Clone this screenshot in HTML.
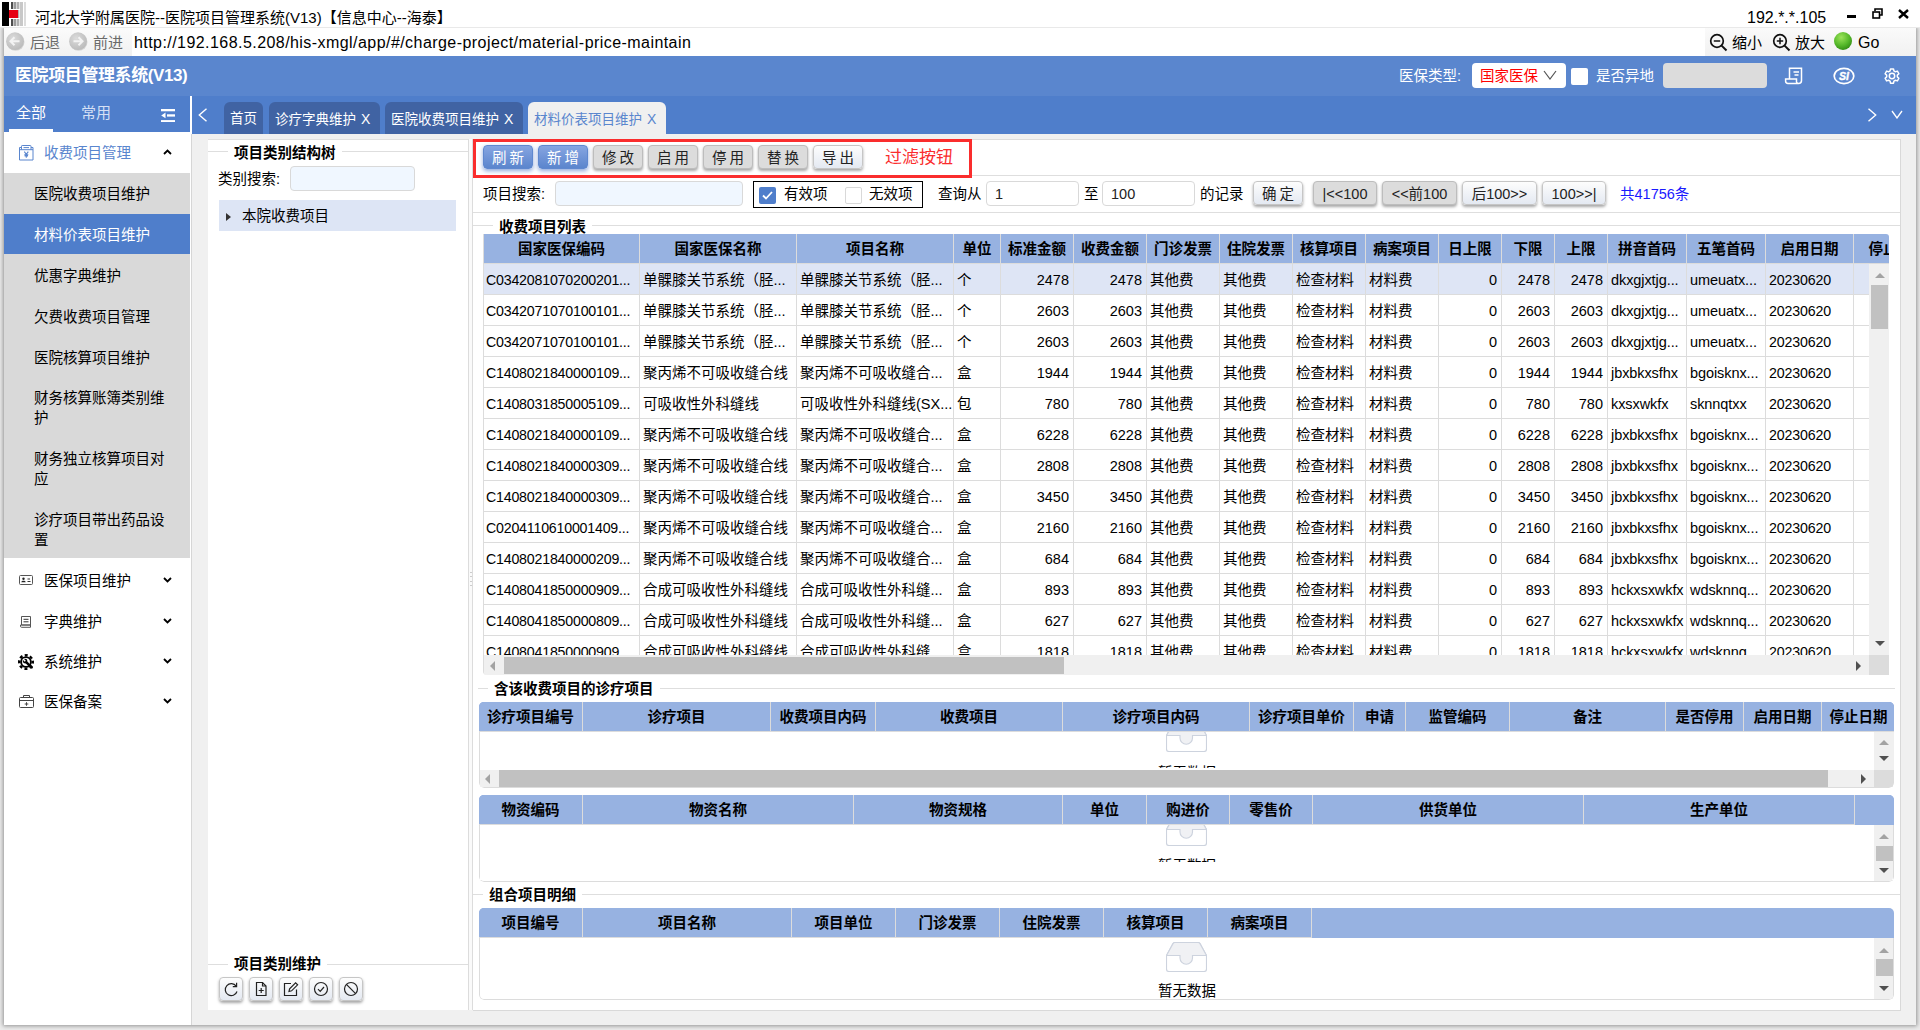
<!DOCTYPE html>
<html lang="zh-CN">
<head>
<meta charset="utf-8">
<title>河北大学附属医院--医院项目管理系统(V13)</title>
<style>
*{box-sizing:border-box;margin:0;padding:0}
html,body{width:1920px;height:1030px;overflow:hidden}
body{position:relative;background:#ebebeb;font-family:"Liberation Sans","Noto Sans CJK SC",sans-serif;font-size:14.5px;color:#000}
.abs{position:absolute}
.t{position:absolute;white-space:nowrap;line-height:20px}
/* window chrome */
#titlebar{left:0;top:0;width:1920px;height:28px;background:#fff;z-index:3;border-bottom:1px solid #e9e9e9}
#win{left:4px;top:28px;width:1912px;height:997px;background:#f0f0f0;box-shadow:0 0 4px 1px rgba(0,0,0,.38)}
#navbar{left:0;top:0;width:1912px;height:28px;background:#fff}
#hdr{left:0;top:28px;width:1912px;height:40px;background:#5a86ce}
#tabrow{left:0;top:68px;width:1912px;height:38px;background:#4f7ecb}
#sidetab{left:0;top:68px;width:186px;height:36px;background:#4f7ecb}
/* sidebar */
#side{left:0;top:104px;width:187px;height:893px;background:#fff}
.sub{position:absolute;left:0;width:186px;background:#d9d9d9}
.sub .t{left:30px;font-size:14.5px}
.mi{position:absolute;left:40px;font-size:14.5px;line-height:20px;white-space:nowrap}
.caret{position:absolute;left:159px;width:9px;height:6px}
/* tabs */
.tab{position:absolute;top:6px;height:32px;background:#4063a3;border-radius:6px 6px 0 0;color:#fff;font-size:13.5px;line-height:20px;padding:7px 0 0 6px;white-space:nowrap}
.tab.act{background:#f0f0f0;color:#5a86ce}
.tab b{font-weight:normal;font-size:14px;margin-left:5px}
/* panels */
.panel{position:absolute;background:#fff}
.hl{position:absolute;height:1px;background:#dedede}
.vl{position:absolute;width:1px;background:#dedede}
.lg{position:absolute;font-weight:bold;font-size:14.5px;line-height:20px;background:#fff;padding:0 6px;white-space:nowrap}
.btn{position:absolute;height:24px;border:1px solid #c6c6c6;border-radius:4px;background:linear-gradient(#fdfdfd,#e4e9f2);box-shadow:0 2px 3px rgba(0,0,0,.35);font-size:14.5px;line-height:24px;text-align:center;white-space:nowrap;color:#222}
.btn.pri{background:linear-gradient(#86a5e1,#5b85cd);border-color:#5f88cf;color:#fff;box-shadow:0 2px 4px rgba(50,95,190,.55)}
.btn.dis{background:#dcdcdc;border-color:#bdbdbd;color:#222}
.inp{position:absolute;border:1px solid #d9d9d9;border-radius:4px;background:#f0f7ff}
/* tables */
.tb{position:absolute;overflow:hidden}
.th{position:absolute;top:0;height:30px;background:#97b2e1;border-right:1px solid #dcdcdc;border-bottom:1px solid #dcdcdc;font-weight:bold;font-size:14.5px;line-height:30px;text-align:center;white-space:nowrap;overflow:hidden}
.row{position:absolute;left:0;height:31px;border-bottom:1px solid #dcdcdc}
.c{position:absolute;top:0;height:31px;border-right:1px solid #dcdcdc;font-size:14.5px;line-height:33px;padding:0 3px;white-space:nowrap;overflow:hidden}
.c.c0{font-size:14.2px;letter-spacing:-.2px;padding-left:2px}
.c.c1{font-size:14.2px;letter-spacing:-.15px}
.c.c2{letter-spacing:-.08px}
.c.r{text-align:right;padding-right:4px}
.sbv{position:absolute;width:20px;background:#f0f0f0}
.sbh{position:absolute;height:19px;background:#f0f0f0}
.thumb{position:absolute;background:#c1c1c1}
.au,.ad,.al,.ar{position:absolute;width:0;height:0;border:5px solid transparent}
.au{border-top:0;border-bottom:5px solid #a3a3a3}
.ad{border-bottom:0;border-top:5px solid #505050}
.al{border-left:0;border-right:5px solid #a3a3a3}
.ar{border-right:0;border-left:5px solid #505050}
.empty{position:absolute;font-size:14.5px;line-height:20px;white-space:nowrap;color:#000}
</style>
</head>
<body>
<div id="titlebar" class="abs">
  
  <svg class="abs" style="left:2px;top:2px" width="25" height="24" viewBox="0 0 25 24">
    <rect x="0" y="0" width="7" height="24" fill="#000"/>
    <rect x="9" y="0" width="2" height="24" fill="#4d4d4d"/>
    <rect x="11" y="0" width="1" height="24" fill="#c8c8c8"/>
    <rect x="12" y="0" width="2" height="24" fill="#9a9a9a"/>
    <rect x="14" y="0" width="1" height="24" fill="#d8d8d8"/>
    <rect x="15" y="0" width="2" height="24" fill="#b0b0b0"/>
    <rect x="17" y="0" width="1" height="24" fill="#e4e4e4"/>
    <rect x="18" y="0" width="3" height="24" fill="#c8c8c8"/>
    <rect x="22" y="0" width="2" height="24" fill="#dcdcdc"/>
    <rect x="7" y="8" width="9" height="8" fill="#e60012"/>
    <rect x="7" y="16" width="11" height="1" fill="#fff"/>
    <rect x="7" y="7" width="11" height="1" fill="#fff"/>
  </svg>
  <div class="t" style="left:35px;top:7px;font-size:15px;line-height:22px">河北大学附属医院--医院项目管理系统(V13)【信息中心--海泰】</div>
  <div class="t" style="left:1747px;top:7px;font-size:16px;line-height:22px">192.*.*.105</div>
  <div class="abs" style="left:1847px;top:15px;width:9px;height:3px;background:#000"></div>
  <svg class="abs" style="left:1872px;top:8px" width="11" height="11" viewBox="0 0 11 11" fill="none" stroke="#000" stroke-width="1.6">
    <path d="M3 3V1H10V7H8"/><rect x="1" y="4" width="6.5" height="6"/>
  </svg>
  <svg class="abs" style="left:1898px;top:9px" width="11" height="10" viewBox="0 0 11 10" fill="none" stroke="#000" stroke-width="2.4">
    <path d="M1 1L10 9M10 1L1 9"/>
  </svg>

</div>
<div id="win" class="abs">
  <div id="navbar" class="abs">
    
    <div class="abs" style="left:0;top:0;width:128px;height:28px;background:linear-gradient(#fbfbfb,#f1f1f1)"></div>
    <div class="abs" style="left:1701px;top:0;width:211px;height:28px;background:linear-gradient(#fafafa,#f1f1f1)"></div>
    <svg class="abs" style="left:1px;top:3px" width="22" height="22" viewBox="0 0 22 22">
      <defs><radialGradient id="gb" cx="40%" cy="35%" r="70%"><stop offset="0" stop-color="#dcdcdc"/><stop offset="1" stop-color="#b9b9b9"/></radialGradient></defs>
      <circle cx="10.600" cy="10.900" r="8.900" fill="rgba(0,0,0,.13)"/><circle cx="10" cy="10.200" r="8.900" fill="url(#gb)"/>
      <path d="M14.500 10.200H6M9.500 6.200L5.500 10.200L9.500 14.200" stroke="#f3f3f3" stroke-width="2" fill="none"/>
    </svg>
    <div class="t" style="left:26px;top:4px;font-size:15px;line-height:22px;color:#6a6a6a">后退</div>
    <svg class="abs" style="left:63.900px;top:3px" width="22" height="22" viewBox="0 0 22 22">
      <circle cx="10.600" cy="10.900" r="8.900" fill="rgba(0,0,0,.13)"/><circle cx="10" cy="10.200" r="8.900" fill="url(#gb)"/>
      <path d="M5.500 10.200H14M10.500 6.200L14.500 10.200L10.500 14.200" stroke="#f3f3f3" stroke-width="2" fill="none"/>
    </svg>
    <div class="t" style="left:89px;top:4px;font-size:15px;line-height:22px;color:#6a6a6a">前进</div>
    <div class="t" style="left:130px;top:4px;font-size:16px;line-height:22px;letter-spacing:.44px" id="url">http://192.168.5.208/his-xmgl/app/#/charge-project/material-price-maintain</div>
    <svg class="abs" style="left:1705px;top:5px" width="19" height="19" viewBox="0 0 19 19" fill="none" stroke="#111" stroke-width="1.7">
      <circle cx="8" cy="8" r="6.3"/><path d="M12.6 12.6L17.5 17.5" stroke-width="2"/><path d="M4.8 8H11.2" stroke-width="1.5"/>
    </svg>
    <div class="t" style="left:1728px;top:4px;font-size:15px;line-height:22px">缩小</div>
    <svg class="abs" style="left:1768px;top:5px" width="19" height="19" viewBox="0 0 19 19" fill="none" stroke="#111" stroke-width="1.7">
      <circle cx="8" cy="8" r="6.3"/><path d="M12.6 12.6L17.5 17.5" stroke-width="2"/><path d="M4.8 8H11.2M8 4.8V11.2" stroke-width="1.5"/>
    </svg>
    <div class="t" style="left:1791px;top:4px;font-size:15px;line-height:22px">放大</div>
    <svg class="abs" style="left:1829px;top:3px" width="21" height="21" viewBox="0 0 21 21">
      <defs><radialGradient id="gg" cx="40%" cy="30%" r="75%"><stop offset="0" stop-color="#9be35a"/><stop offset=".6" stop-color="#55b82a"/><stop offset="1" stop-color="#2f8a12"/></radialGradient></defs>
      <circle cx="10" cy="10" r="9" fill="url(#gg)"/>
    </svg>
    <div class="t" style="left:1854px;top:4px;font-size:16px;line-height:22px">Go</div>

  </div>
  <div id="hdr" class="abs">
    
    <div class="t" style="left:11px;top:9px;font-size:17px;line-height:22px;font-weight:bold;color:#fff;letter-spacing:-.4px">医院项目管理系统(V13)</div>
    <div class="t" style="left:1395px;top:10px;color:#fff">医保类型:</div>
    <div class="abs" style="left:1468px;top:7px;width:94px;height:25px;background:#fff;border-radius:4px"></div>
    <div class="t" style="left:1476px;top:10px;color:#f00">国家医保</div>
    <svg class="abs" style="left:1539px;top:14px" width="14" height="10" viewBox="0 0 14 10" fill="none" stroke="#555" stroke-width="1.2"><path d="M1 1L7 9L13 1"/></svg>
    <div class="abs" style="left:1567px;top:12px;width:17px;height:17px;background:#fff;border-radius:2px"></div>
    <div class="t" style="left:1592px;top:10px;color:#fff">是否异地</div>
    <div class="abs" style="left:1659px;top:7px;width:104px;height:25px;background:#dcdcdc;border-radius:4px"></div>
    <svg class="abs" style="left:1780px;top:10px" width="20" height="20" viewBox="0 0 20 20" fill="none" stroke="#fff" stroke-width="1.5">
      <path d="M5.5 13V2.2H17.5V14.5A3 3 0 0 1 14.5 17.5H4A2.4 2.4 0 0 1 1.6 15.1V13H12.5V15A2 2 0 0 0 14.5 17.5"/>
      <path d="M9.500 6H15M10.500 9H14.500"/>
    </svg>
    <svg class="abs" style="left:1829px;top:11px" width="22" height="18" viewBox="0 0 22 18" fill="none" stroke="#fff">
      <ellipse cx="11" cy="9" rx="9.8" ry="7.6" stroke-width="1.7"/>
      <text x="11" y="12.800" text-anchor="middle" font-family="Liberation Sans,sans-serif" font-weight="bold" font-style="italic" font-size="10.600" fill="#fff" stroke="#fff" stroke-width=".35">SI</text>
    </svg>
    <svg class="abs" style="left:1879px;top:11px" width="18" height="18" viewBox="0 0 24 24" fill="none" stroke="#fff" stroke-width="2">
      <circle cx="12" cy="12" r="3.6"/>
      <path d="M10 2.5h4l.6 2.8 1.9 1.1 2.7-.9 2 3.5-2.1 1.9v2.2l2.1 1.9-2 3.5-2.7-.9-1.9 1.1-.6 2.8h-4l-.6-2.8-1.9-1.1-2.7.9-2-3.5 2.1-1.9v-2.2L2.800 9l2-3.500 2.700.900 1.900-1.100z" stroke-linejoin="round"/>
    </svg>

  </div>
  <div id="tabrow" class="abs">
    
    <div class="abs" style="left:186px;top:0;width:2px;height:38px;background:#fff"></div>
    <svg class="abs" style="left:194px;top:11.600px" width="9" height="14" viewBox="0 0 9 14" fill="none" stroke="#fff" stroke-width="1.400"><path d="M8.500 .7L1.300 7L8.500 13.300"/></svg>
    <div class="tab" style="left:220px;width:39px">首页</div>
    <div class="tab" style="left:265px;width:111px">诊疗字典维护<b>X</b></div>
    <div class="tab" style="left:381px;width:138px">医院收费项目维护<b>X</b></div>
    <div class="tab act" style="left:524px;width:138px">材料价表项目维护<b>X</b></div>
    <svg class="abs" style="left:1864px;top:11.600px" width="9" height="14" viewBox="0 0 9 14" fill="none" stroke="#fff" stroke-width="1.400"><path d="M.5 .7L7.700 7L.5 13.300"/></svg>
    <svg class="abs" style="left:1887px;top:14px" width="12" height="9" viewBox="0 0 12 9" fill="none" stroke="#fff" stroke-width="1.3"><path d="M1 1L6 8L11 1"/></svg>

  </div>
  <div id="sidetab" class="abs">
    
    <div class="t" style="left:12px;top:6px;font-size:15px;line-height:22px;color:#fff">全部</div>
    <div class="t" style="left:77px;top:6px;font-size:15px;line-height:22px;color:#d5e0f5">常用</div>
    <div class="abs" style="left:5px;top:33px;width:44px;height:3px;background:#fff"></div>
    <svg class="abs" style="left:157px;top:12.600px" width="14" height="13.400" viewBox="0 0 14 13.400" fill="#fff">
      <rect x="0" y="0" width="14" height="2.300"/><rect x="6" y="5.300" width="8" height="2.300"/><rect x="0" y="11.100" width="14" height="2.300"/>
      <path d="M4.500 3.600V9.300L.2 6.450z"/>
    </svg>

  </div>
  <div id="side" class="abs">
    
    <svg class="abs" style="left:14.5px;top:12.5px" width="15" height="16" viewBox="0 0 15 16" fill="none" stroke="#5a86ce" stroke-width="1">
      <path d="M2.500 2.500H.5V15H14V2.500H12"/><path d="M2.500 4.700V1.200Q2.500 .5 3.200 .5H11.300Q12 .5 12 1.200V4.700"/><path d="M.5 4.700H14"/><path d="M4.500 2.600H10"/>
      <path d="M5.300 6.600L7.300 9.300L9.300 6.600M7.300 9.300V12.800M5.300 9.800H9.300M5.600 10.900H9" stroke-width="1.100"/>
    </svg>
    <div class="mi" style="top:11px;color:#5a86ce">收费项目管理</div>
    <svg class="caret" style="top:17px" viewBox="0 0 9 6" fill="none" stroke="#000" stroke-width="1.8"><path d="M1 5L4.500 1.500L8 5"/></svg>

    <div class="sub" style="top:41px;height:385px">
      <div class="t" style="top:11px">医院收费项目维护</div>
      <div class="abs" style="left:0;top:41px;width:186px;height:40px;background:#4f7ecb"></div>
      <div class="t" style="top:52px;color:#fff">材料价表项目维护</div>
      <div class="t" style="top:93px">优惠字典维护</div>
      <div class="t" style="top:134px">欠费收费项目管理</div>
      <div class="t" style="top:175px">医院核算项目维护</div>
      <div class="t" style="top:215px">财务核算账簿类别维<br>护</div>
      <div class="t" style="top:276px">财务独立核算项目对<br>应</div>
      <div class="t" style="top:337px">诊疗项目带出药品设<br>置</div>
    </div>

    <svg class="abs" style="left:15px;top:443px" width="14" height="10" viewBox="0 0 14 10" fill="none" stroke="#555" stroke-width="1">
      <rect x=".5" y=".5" width="13" height="9" rx="1"/><circle cx="4.500" cy="3.800" r="1.200" fill="#222" stroke="none"/><path d="M2.400 7.200C2.400 5.400 6.600 5.400 6.600 7.200z" fill="#222" stroke="none"/><path d="M8.500 4H11M8.500 6.500H11.500" stroke="#333"/>
    </svg>
    <div class="mi" style="top:439px">医保项目维护</div>
    <svg class="caret" style="top:445px" viewBox="0 0 9 6" fill="none" stroke="#000" stroke-width="1.8"><path d="M1 1L4.500 4.500L8 1"/></svg>

    <svg class="abs" style="left:16px;top:484px" width="12" height="12" viewBox="0 0 12 12" fill="none" stroke="#555" stroke-width="1">
      <path d="M1.500 .5H10.500V9H1.500z"/><path d="M.5 9H10.500V11.300H1.500Q.5 11.300 .5 10.200z"/><path d="M3.500 3.300H8.500M3.500 5.800H8.500" stroke="#333"/>
    </svg>
    <div class="mi" style="top:480px">字典维护</div>
    <svg class="caret" style="top:486px" viewBox="0 0 9 6" fill="none" stroke="#000" stroke-width="1.8"><path d="M1 1L4.500 4.500L8 1"/></svg>

    <svg class="abs" style="left:14px;top:521.5px" width="16" height="16" viewBox="0 0 16 16">
      <circle cx="8" cy="8" r="4.900" fill="none" stroke="#000" stroke-width="1.900"/>
      <circle cx="8" cy="8" r="6.800" fill="none" stroke="#000" stroke-width="2.400" stroke-dasharray="3 2.340" stroke-dashoffset="1.500"/>
      <path d="M7.600 7.600L13.700 13.400" stroke="#000" stroke-width="2.500" stroke-linecap="round"/>
      <circle cx="7.100" cy="7.100" r="2.300" fill="#000"/>
      <path d="M7.300 7.300L5 5" stroke="#fff" stroke-width="1.500"/>
    </svg>
    <div class="mi" style="top:520px">系统维护</div>
    <svg class="caret" style="top:526px" viewBox="0 0 9 6" fill="none" stroke="#000" stroke-width="1.800"><path d="M1 1L4.500 4.500L8 1"/></svg>

    <svg class="abs" style="left:14.5px;top:563px" width="15" height="13" viewBox="0 0 15 13" fill="none" stroke="#444" stroke-width="1">
      <rect x=".5" y="2.500" width="14" height="10" rx="1"/><path d="M4.500 2.500V.5H10.500V2.500"/><path d="M.5 5.500H14.500"/><path d="M7.500 7.200V10.800M5.700 9H9.300"/>
    </svg>
    <div class="mi" style="top:560px">医保备案</div>
    <svg class="caret" style="top:566px" viewBox="0 0 9 6" fill="none" stroke="#000" stroke-width="1.800"><path d="M1 1L4.500 4.500L8 1"/></svg>
    <div class="abs" style="left:187px;top:2px;width:1px;height:891px;background:#d6d6d6"></div>

  </div>
  
  <div class="panel" style="left:204px;top:111px;width:261px;height:871px;border-right:1px solid #dcdcdc">
    <div class="hl" style="left:0;top:0;width:260px;background:#e0e0e0"></div>
    <div class="hl" style="left:0;top:12px;width:260px"></div>
    <div class="lg" style="left:20px;top:4px">项目类别结构树</div>
    <div class="t" style="left:10px;top:30px">类别搜索:</div>
    <div class="inp" style="left:82px;top:27px;width:125px;height:25px"></div>
    <div class="abs" style="left:11px;top:61px;width:237px;height:31px;background:#dde5f5"></div>
    <div class="abs" style="left:18px;top:74px;width:0;height:0;border:4px solid transparent;border-left:5px solid #333;border-right:0"></div>
    <div class="t" style="left:34px;top:67px">本院收费项目</div>
    <div class="hl" style="left:0;top:825px;width:260px"></div>
    <div class="lg" style="left:20px;top:815px">项目类别维护</div>
    <div class="btn" style="left:11px;top:838px;width:24px;height:24px"><svg style="position:absolute;left:3px;top:3px" width="16" height="16" viewBox="0 0 16 16" fill="none" stroke="#222" stroke-width="1.200"><path d="M13.200 5.200A6 6 0 1 0 14 10.500" /><path d="M13.600 1.800V5.600H9.800" /></svg></div><div class="btn" style="left:41px;top:838px;width:24px;height:24px"><svg style="position:absolute;left:3px;top:3px" width="16" height="16" viewBox="0 0 16 16" fill="none" stroke="#222" stroke-width="1.200"><path d="M3.500 1.500H9.500L13 5V14.500H3.500z"/><path d="M9.500 1.500V5H13"/><path d="M8.200 7V12M5.700 9.500H10.700"/></svg></div><div class="btn" style="left:71px;top:838px;width:24px;height:24px"><svg style="position:absolute;left:3px;top:3px" width="16" height="16" viewBox="0 0 16 16" fill="none" stroke="#222" stroke-width="1.200"><path d="M13.500 8.500V14.500H1.500V2.500H8"/><path d="M6 10.500L6.600 7.800L12.600 1.800L14.600 3.800L8.600 9.800z"/></svg></div><div class="btn" style="left:101px;top:838px;width:24px;height:24px"><svg style="position:absolute;left:3px;top:3px" width="16" height="16" viewBox="0 0 16 16" fill="none" stroke="#222" stroke-width="1.200"><circle cx="8" cy="8" r="6.500"/><path d="M5 8.200L7.200 10.400L11 6"/></svg></div><div class="btn" style="left:131px;top:838px;width:24px;height:24px"><svg style="position:absolute;left:3px;top:3px" width="16" height="16" viewBox="0 0 16 16" fill="none" stroke="#222" stroke-width="1.200"><circle cx="8" cy="8" r="6.500"/><path d="M3.400 3.400L12.600 12.600"/></svg></div>
  </div>
  <div class="abs" style="left:465px;top:111px;width:4px;height:871px;background:#fafafa;border-right:1px solid #dcdcdc"></div>
  <div class="abs" style="left:466px;top:544px;width:2px;height:1px;background:#ccc;box-shadow:0 4px 0 #ccc,0 9px 0 #ccc,0 13px 0 #ccc"></div>

  
  <div class="panel" id="main" style="left:469px;top:111px;width:1428px;height:872px;border-right:1px solid #d9d9d9;border-bottom:1px solid #d9d9d9">
    <div class="hl" style="left:0;top:0;width:1427px;background:#dcdcdc"></div>
    <div class="hl" style="left:0;top:36px;width:1427px"></div>
    <div class="hl" style="left:0;top:73px;width:1427px"></div>
    <div class="abs" style="left:0;top:0;width:499px;height:39px;border:3px solid #fa2d2d"></div>
    <div class="btn pri" style="left:10px;top:6px;width:50px;letter-spacing:3px;padding-left:3px">刷新</div><div class="btn pri" style="left:65px;top:6px;width:50px;letter-spacing:3px;padding-left:3px">新增</div><div class="btn dis" style="left:120px;top:6px;width:50px;letter-spacing:3px;padding-left:3px">修改</div><div class="btn dis" style="left:175px;top:6px;width:50px;letter-spacing:3px;padding-left:3px">启用</div><div class="btn dis" style="left:230px;top:6px;width:50px;letter-spacing:3px;padding-left:3px">停用</div><div class="btn dis" style="left:285px;top:6px;width:50px;letter-spacing:3px;padding-left:3px">替换</div><div class="btn " style="left:340px;top:6px;width:50px;letter-spacing:3px;padding-left:3px">导出</div>
    <div class="t" style="left:412px;top:7px;font-size:17px;line-height:24px;color:#fa2d2d">过滤按钮</div>
    
    <div class="t" style="left:10px;top:45px">项目搜索:</div>
    <div class="inp" style="left:82px;top:42px;width:188px;height:25px"></div>
    <div class="abs" style="left:280px;top:42px;width:170px;height:27px;border:1px solid #000"></div>
    <div class="abs" style="left:286px;top:48px;width:17px;height:17px;background:#4f7ecb;border-radius:2px"><svg style="position:absolute;left:3px;top:4px" width="11" height="9" viewBox="0 0 11 9" fill="none" stroke="#fff" stroke-width="1.8"><path d="M1 4.500L4 7.500L10 1"/></svg></div>
    <div class="t" style="left:311px;top:45px">有效项</div>
    <div class="abs" style="left:372px;top:48px;width:17px;height:17px;background:#fff;border:1px solid #d9d9d9;border-radius:2px"></div>
    <div class="t" style="left:396px;top:45px">无效项</div>
    <div class="t" style="left:465px;top:45px">查询从</div>
    <div class="inp" style="left:513px;top:42px;width:93px;height:25px;background:#fff"></div>
    <div class="t" style="left:522px;top:45px;color:#222">1</div>
    <div class="t" style="left:611px;top:45px">至</div>
    <div class="inp" style="left:629px;top:42px;width:93px;height:25px;background:#fff"></div>
    <div class="t" style="left:638px;top:45px;color:#222">100</div>
    <div class="t" style="left:727px;top:45px">的记录</div>
    <div class="btn " style="left:780px;top:42px;width:50px;letter-spacing:3px;padding-left:3px">确定</div>
    <div class="btn dis" style="left:840px;top:42px;width:64px;letter-spacing:0">|&lt;&lt;100</div>
    <div class="btn dis" style="left:909px;top:42px;width:75px;letter-spacing:0">&lt;&lt;前100</div>
    <div class="btn " style="left:989px;top:42px;width:75px;letter-spacing:0">后100&gt;&gt;</div>
    <div class="btn " style="left:1069px;top:42px;width:64px;letter-spacing:0">100&gt;&gt;|</div>
    <div class="t" style="left:1147px;top:45px;color:#1a1aff">共41756条</div>
    <div class="hl" style="left:0;top:86px;width:1427px"></div>
    <div class="lg" style="left:20px;top:78px">收费项目列表</div>

    <div class="tb" style="left:10px;top:95px;width:1406px;height:441px;border-left:1px solid #dcdcdc;border-radius:0 3px 0 4px">
<div class="th" style="left:0px;width:156px">国家医保编码</div>
<div class="th" style="left:156px;width:157px">国家医保名称</div>
<div class="th" style="left:313px;width:157px">项目名称</div>
<div class="th" style="left:470px;width:47px">单位</div>
<div class="th" style="left:517px;width:73px">标准金额</div>
<div class="th" style="left:590px;width:73px">收费金额</div>
<div class="th" style="left:663px;width:73px">门诊发票</div>
<div class="th" style="left:736px;width:73px">住院发票</div>
<div class="th" style="left:809px;width:73px">核算项目</div>
<div class="th" style="left:882px;width:73px">病案项目</div>
<div class="th" style="left:955px;width:63px">日上限</div>
<div class="th" style="left:1018px;width:53px">下限</div>
<div class="th" style="left:1071px;width:53px">上限</div>
<div class="th" style="left:1124px;width:79px">拼音首码</div>
<div class="th" style="left:1203px;width:79px">五笔首码</div>
<div class="th" style="left:1282px;width:88px">启用日期</div>
<div class="th" style="left:1370px;width:88px">停止日期</div>
<div class="row" style="top:30px;width:1460px;background:#dee5f5;">
<div class="c c0" style="left:0px;width:156px">C0342081070200201...</div>
<div class="c" style="left:156px;width:157px">单髁膝关节系统（胫...</div>
<div class="c" style="left:313px;width:157px">单髁膝关节系统（胫...</div>
<div class="c" style="left:470px;width:47px">个</div>
<div class="c r" style="left:517px;width:73px">2478</div>
<div class="c r" style="left:590px;width:73px">2478</div>
<div class="c" style="left:663px;width:73px">其他费</div>
<div class="c" style="left:736px;width:73px">其他费</div>
<div class="c" style="left:809px;width:73px">检查材料</div>
<div class="c" style="left:882px;width:73px">材料费</div>
<div class="c r" style="left:955px;width:63px">0</div>
<div class="c r" style="left:1018px;width:53px">2478</div>
<div class="c r" style="left:1071px;width:53px">2478</div>
<div class="c c2" style="left:1124px;width:79px">dkxgjxtjg...</div>
<div class="c c2" style="left:1203px;width:79px">umeuatx...</div>
<div class="c c1" style="left:1282px;width:88px">20230620</div>
<div class="c" style="left:1370px;width:88px"></div>
</div>
<div class="row" style="top:61px;width:1460px;">
<div class="c c0" style="left:0px;width:156px">C0342071070100101...</div>
<div class="c" style="left:156px;width:157px">单髁膝关节系统（胫...</div>
<div class="c" style="left:313px;width:157px">单髁膝关节系统（胫...</div>
<div class="c" style="left:470px;width:47px">个</div>
<div class="c r" style="left:517px;width:73px">2603</div>
<div class="c r" style="left:590px;width:73px">2603</div>
<div class="c" style="left:663px;width:73px">其他费</div>
<div class="c" style="left:736px;width:73px">其他费</div>
<div class="c" style="left:809px;width:73px">检查材料</div>
<div class="c" style="left:882px;width:73px">材料费</div>
<div class="c r" style="left:955px;width:63px">0</div>
<div class="c r" style="left:1018px;width:53px">2603</div>
<div class="c r" style="left:1071px;width:53px">2603</div>
<div class="c c2" style="left:1124px;width:79px">dkxgjxtjg...</div>
<div class="c c2" style="left:1203px;width:79px">umeuatx...</div>
<div class="c c1" style="left:1282px;width:88px">20230620</div>
<div class="c" style="left:1370px;width:88px"></div>
</div>
<div class="row" style="top:92px;width:1460px;">
<div class="c c0" style="left:0px;width:156px">C0342071070100101...</div>
<div class="c" style="left:156px;width:157px">单髁膝关节系统（胫...</div>
<div class="c" style="left:313px;width:157px">单髁膝关节系统（胫...</div>
<div class="c" style="left:470px;width:47px">个</div>
<div class="c r" style="left:517px;width:73px">2603</div>
<div class="c r" style="left:590px;width:73px">2603</div>
<div class="c" style="left:663px;width:73px">其他费</div>
<div class="c" style="left:736px;width:73px">其他费</div>
<div class="c" style="left:809px;width:73px">检查材料</div>
<div class="c" style="left:882px;width:73px">材料费</div>
<div class="c r" style="left:955px;width:63px">0</div>
<div class="c r" style="left:1018px;width:53px">2603</div>
<div class="c r" style="left:1071px;width:53px">2603</div>
<div class="c c2" style="left:1124px;width:79px">dkxgjxtjg...</div>
<div class="c c2" style="left:1203px;width:79px">umeuatx...</div>
<div class="c c1" style="left:1282px;width:88px">20230620</div>
<div class="c" style="left:1370px;width:88px"></div>
</div>
<div class="row" style="top:123px;width:1460px;">
<div class="c c0" style="left:0px;width:156px">C1408021840000109...</div>
<div class="c" style="left:156px;width:157px">聚丙烯不可吸收缝合线</div>
<div class="c" style="left:313px;width:157px">聚丙烯不可吸收缝合...</div>
<div class="c" style="left:470px;width:47px">盒</div>
<div class="c r" style="left:517px;width:73px">1944</div>
<div class="c r" style="left:590px;width:73px">1944</div>
<div class="c" style="left:663px;width:73px">其他费</div>
<div class="c" style="left:736px;width:73px">其他费</div>
<div class="c" style="left:809px;width:73px">检查材料</div>
<div class="c" style="left:882px;width:73px">材料费</div>
<div class="c r" style="left:955px;width:63px">0</div>
<div class="c r" style="left:1018px;width:53px">1944</div>
<div class="c r" style="left:1071px;width:53px">1944</div>
<div class="c c2" style="left:1124px;width:79px">jbxbkxsfhx</div>
<div class="c c2" style="left:1203px;width:79px">bgoisknx...</div>
<div class="c c1" style="left:1282px;width:88px">20230620</div>
<div class="c" style="left:1370px;width:88px"></div>
</div>
<div class="row" style="top:154px;width:1460px;">
<div class="c c0" style="left:0px;width:156px">C1408031850005109...</div>
<div class="c" style="left:156px;width:157px">可吸收性外科缝线</div>
<div class="c" style="left:313px;width:157px">可吸收性外科缝线(SX...</div>
<div class="c" style="left:470px;width:47px">包</div>
<div class="c r" style="left:517px;width:73px">780</div>
<div class="c r" style="left:590px;width:73px">780</div>
<div class="c" style="left:663px;width:73px">其他费</div>
<div class="c" style="left:736px;width:73px">其他费</div>
<div class="c" style="left:809px;width:73px">检查材料</div>
<div class="c" style="left:882px;width:73px">材料费</div>
<div class="c r" style="left:955px;width:63px">0</div>
<div class="c r" style="left:1018px;width:53px">780</div>
<div class="c r" style="left:1071px;width:53px">780</div>
<div class="c c2" style="left:1124px;width:79px">kxsxwkfx</div>
<div class="c c2" style="left:1203px;width:79px">sknnqtxx</div>
<div class="c c1" style="left:1282px;width:88px">20230620</div>
<div class="c" style="left:1370px;width:88px"></div>
</div>
<div class="row" style="top:185px;width:1460px;">
<div class="c c0" style="left:0px;width:156px">C1408021840000109...</div>
<div class="c" style="left:156px;width:157px">聚丙烯不可吸收缝合线</div>
<div class="c" style="left:313px;width:157px">聚丙烯不可吸收缝合...</div>
<div class="c" style="left:470px;width:47px">盒</div>
<div class="c r" style="left:517px;width:73px">6228</div>
<div class="c r" style="left:590px;width:73px">6228</div>
<div class="c" style="left:663px;width:73px">其他费</div>
<div class="c" style="left:736px;width:73px">其他费</div>
<div class="c" style="left:809px;width:73px">检查材料</div>
<div class="c" style="left:882px;width:73px">材料费</div>
<div class="c r" style="left:955px;width:63px">0</div>
<div class="c r" style="left:1018px;width:53px">6228</div>
<div class="c r" style="left:1071px;width:53px">6228</div>
<div class="c c2" style="left:1124px;width:79px">jbxbkxsfhx</div>
<div class="c c2" style="left:1203px;width:79px">bgoisknx...</div>
<div class="c c1" style="left:1282px;width:88px">20230620</div>
<div class="c" style="left:1370px;width:88px"></div>
</div>
<div class="row" style="top:216px;width:1460px;">
<div class="c c0" style="left:0px;width:156px">C1408021840000309...</div>
<div class="c" style="left:156px;width:157px">聚丙烯不可吸收缝合线</div>
<div class="c" style="left:313px;width:157px">聚丙烯不可吸收缝合...</div>
<div class="c" style="left:470px;width:47px">盒</div>
<div class="c r" style="left:517px;width:73px">2808</div>
<div class="c r" style="left:590px;width:73px">2808</div>
<div class="c" style="left:663px;width:73px">其他费</div>
<div class="c" style="left:736px;width:73px">其他费</div>
<div class="c" style="left:809px;width:73px">检查材料</div>
<div class="c" style="left:882px;width:73px">材料费</div>
<div class="c r" style="left:955px;width:63px">0</div>
<div class="c r" style="left:1018px;width:53px">2808</div>
<div class="c r" style="left:1071px;width:53px">2808</div>
<div class="c c2" style="left:1124px;width:79px">jbxbkxsfhx</div>
<div class="c c2" style="left:1203px;width:79px">bgoisknx...</div>
<div class="c c1" style="left:1282px;width:88px">20230620</div>
<div class="c" style="left:1370px;width:88px"></div>
</div>
<div class="row" style="top:247px;width:1460px;">
<div class="c c0" style="left:0px;width:156px">C1408021840000309...</div>
<div class="c" style="left:156px;width:157px">聚丙烯不可吸收缝合线</div>
<div class="c" style="left:313px;width:157px">聚丙烯不可吸收缝合...</div>
<div class="c" style="left:470px;width:47px">盒</div>
<div class="c r" style="left:517px;width:73px">3450</div>
<div class="c r" style="left:590px;width:73px">3450</div>
<div class="c" style="left:663px;width:73px">其他费</div>
<div class="c" style="left:736px;width:73px">其他费</div>
<div class="c" style="left:809px;width:73px">检查材料</div>
<div class="c" style="left:882px;width:73px">材料费</div>
<div class="c r" style="left:955px;width:63px">0</div>
<div class="c r" style="left:1018px;width:53px">3450</div>
<div class="c r" style="left:1071px;width:53px">3450</div>
<div class="c c2" style="left:1124px;width:79px">jbxbkxsfhx</div>
<div class="c c2" style="left:1203px;width:79px">bgoisknx...</div>
<div class="c c1" style="left:1282px;width:88px">20230620</div>
<div class="c" style="left:1370px;width:88px"></div>
</div>
<div class="row" style="top:278px;width:1460px;">
<div class="c c0" style="left:0px;width:156px">C0204110610001409...</div>
<div class="c" style="left:156px;width:157px">聚丙烯不可吸收缝合线</div>
<div class="c" style="left:313px;width:157px">聚丙烯不可吸收缝合...</div>
<div class="c" style="left:470px;width:47px">盒</div>
<div class="c r" style="left:517px;width:73px">2160</div>
<div class="c r" style="left:590px;width:73px">2160</div>
<div class="c" style="left:663px;width:73px">其他费</div>
<div class="c" style="left:736px;width:73px">其他费</div>
<div class="c" style="left:809px;width:73px">检查材料</div>
<div class="c" style="left:882px;width:73px">材料费</div>
<div class="c r" style="left:955px;width:63px">0</div>
<div class="c r" style="left:1018px;width:53px">2160</div>
<div class="c r" style="left:1071px;width:53px">2160</div>
<div class="c c2" style="left:1124px;width:79px">jbxbkxsfhx</div>
<div class="c c2" style="left:1203px;width:79px">bgoisknx...</div>
<div class="c c1" style="left:1282px;width:88px">20230620</div>
<div class="c" style="left:1370px;width:88px"></div>
</div>
<div class="row" style="top:309px;width:1460px;">
<div class="c c0" style="left:0px;width:156px">C1408021840000209...</div>
<div class="c" style="left:156px;width:157px">聚丙烯不可吸收缝合线</div>
<div class="c" style="left:313px;width:157px">聚丙烯不可吸收缝合...</div>
<div class="c" style="left:470px;width:47px">盒</div>
<div class="c r" style="left:517px;width:73px">684</div>
<div class="c r" style="left:590px;width:73px">684</div>
<div class="c" style="left:663px;width:73px">其他费</div>
<div class="c" style="left:736px;width:73px">其他费</div>
<div class="c" style="left:809px;width:73px">检查材料</div>
<div class="c" style="left:882px;width:73px">材料费</div>
<div class="c r" style="left:955px;width:63px">0</div>
<div class="c r" style="left:1018px;width:53px">684</div>
<div class="c r" style="left:1071px;width:53px">684</div>
<div class="c c2" style="left:1124px;width:79px">jbxbkxsfhx</div>
<div class="c c2" style="left:1203px;width:79px">bgoisknx...</div>
<div class="c c1" style="left:1282px;width:88px">20230620</div>
<div class="c" style="left:1370px;width:88px"></div>
</div>
<div class="row" style="top:340px;width:1460px;">
<div class="c c0" style="left:0px;width:156px">C1408041850000909...</div>
<div class="c" style="left:156px;width:157px">合成可吸收性外科缝线</div>
<div class="c" style="left:313px;width:157px">合成可吸收性外科缝...</div>
<div class="c" style="left:470px;width:47px">盒</div>
<div class="c r" style="left:517px;width:73px">893</div>
<div class="c r" style="left:590px;width:73px">893</div>
<div class="c" style="left:663px;width:73px">其他费</div>
<div class="c" style="left:736px;width:73px">其他费</div>
<div class="c" style="left:809px;width:73px">检查材料</div>
<div class="c" style="left:882px;width:73px">材料费</div>
<div class="c r" style="left:955px;width:63px">0</div>
<div class="c r" style="left:1018px;width:53px">893</div>
<div class="c r" style="left:1071px;width:53px">893</div>
<div class="c c2" style="left:1124px;width:79px">hckxsxwkfx</div>
<div class="c c2" style="left:1203px;width:79px">wdsknnq...</div>
<div class="c c1" style="left:1282px;width:88px">20230620</div>
<div class="c" style="left:1370px;width:88px"></div>
</div>
<div class="row" style="top:371px;width:1460px;">
<div class="c c0" style="left:0px;width:156px">C1408041850000809...</div>
<div class="c" style="left:156px;width:157px">合成可吸收性外科缝线</div>
<div class="c" style="left:313px;width:157px">合成可吸收性外科缝...</div>
<div class="c" style="left:470px;width:47px">盒</div>
<div class="c r" style="left:517px;width:73px">627</div>
<div class="c r" style="left:590px;width:73px">627</div>
<div class="c" style="left:663px;width:73px">其他费</div>
<div class="c" style="left:736px;width:73px">其他费</div>
<div class="c" style="left:809px;width:73px">检查材料</div>
<div class="c" style="left:882px;width:73px">材料费</div>
<div class="c r" style="left:955px;width:63px">0</div>
<div class="c r" style="left:1018px;width:53px">627</div>
<div class="c r" style="left:1071px;width:53px">627</div>
<div class="c c2" style="left:1124px;width:79px">hckxsxwkfx</div>
<div class="c c2" style="left:1203px;width:79px">wdsknnq...</div>
<div class="c c1" style="left:1282px;width:88px">20230620</div>
<div class="c" style="left:1370px;width:88px"></div>
</div>
<div class="row" style="top:402px;width:1460px;">
<div class="c c0" style="left:0px;width:156px">C1408041850000909...</div>
<div class="c" style="left:156px;width:157px">合成可吸收性外科缝线</div>
<div class="c" style="left:313px;width:157px">合成可吸收性外科缝...</div>
<div class="c" style="left:470px;width:47px">盒</div>
<div class="c r" style="left:517px;width:73px">1818</div>
<div class="c r" style="left:590px;width:73px">1818</div>
<div class="c" style="left:663px;width:73px">其他费</div>
<div class="c" style="left:736px;width:73px">其他费</div>
<div class="c" style="left:809px;width:73px">检查材料</div>
<div class="c" style="left:882px;width:73px">材料费</div>
<div class="c r" style="left:955px;width:63px">0</div>
<div class="c r" style="left:1018px;width:53px">1818</div>
<div class="c r" style="left:1071px;width:53px">1818</div>
<div class="c c2" style="left:1124px;width:79px">hckxsxwkfx</div>
<div class="c c2" style="left:1203px;width:79px">wdsknnq...</div>
<div class="c c1" style="left:1282px;width:88px">20230620</div>
<div class="c" style="left:1370px;width:88px"></div>
</div>
<div class="sbv" style="left:1385px;top:30px;height:391px;width:21px"><div class="au" style="left:6px;top:9px"></div><div class="thumb" style="left:2px;top:21px;width:17px;height:44px"></div><div class="ad" style="left:6px;top:377px"></div></div>
<div class="sbh" style="left:0;top:421px;width:1385px;height:20px"><div class="al" style="left:6px;top:6px"></div><div class="thumb" style="left:20px;top:2px;width:560px;height:17px"></div><div class="ar" style="left:1372px;top:6px"></div></div>
<div class="abs" style="left:1385px;top:421px;width:21px;height:20px;background:#dcdcdc"></div>
</div>
    
    <div class="hl" style="left:5px;top:549px;width:1417px"></div>
    <div class="lg" style="left:15px;top:540px">含该收费项目的诊疗项目</div>
<div class="tb" style="left:6px;top:563px;width:1415px;height:86px;border-radius:5px">
<div class="abs" style="left:0;top:0;width:1415px;height:30px;background:#97b2e1"></div>
<div class="abs" style="left:0;top:30px;width:1415px;height:56px;border:1px solid #dcdcdc;border-top:0;border-radius:0 0 5px 5px"></div>
<svg class="abs" style="left:687px;top:20px" width="41" height="30" viewBox="0 0 41 30"><path d="M.5 13.500L7 1.600Q7.600 .500 9 .500H32Q33.400 .500 34 1.600L40.500 13.500V27Q40.500 29.500 38 29.500H3Q.5 29.500 .5 27z" fill="#fff" stroke="#cdd3de" stroke-width="1.150"/><path d="M.5 13.500L7 1.600Q7.600 .500 9 .500H32Q33.400 .500 34 1.600L40.500 13.500H26.500V16A6.250 6.250 0 0 1 14 16V13.500z" fill="#f0f1f4" stroke="#cdd3de" stroke-width="1.150"/></svg>
<div class="empty" style="left:679px;top:61px">暂无数据</div>
<div class="abs" style="left:1px;top:66px;width:1413px;height:2px;background:#fff"></div>
<div class="sbv" style="left:1395px;top:30px;height:38px"><div class="au" style="left:5px;top:8px"></div><div class="ad" style="left:5px;top:24px"></div></div>
<div class="sbh" style="left:1px;top:68px;width:1394px;height:17px"><div class="al" style="left:5px;top:4px"></div><div class="thumb" style="left:19px;top:0;width:1329px;height:17px"></div><div class="ar" style="left:1381px;top:4px"></div></div>
<div class="abs" style="left:1395px;top:68px;width:19px;height:17px;background:#dcdcdc"></div>
<div class="abs" style="left:0;top:0;width:1415px;height:30px;background:#97b2e1"></div>

<div class="th" style="left:0px;width:104px">诊疗项目编号</div>
<div class="th" style="left:104px;width:188px">诊疗项目</div>
<div class="th" style="left:292px;width:105px">收费项目内码</div>
<div class="th" style="left:397px;width:187px">收费项目</div>
<div class="th" style="left:584px;width:187px">诊疗项目内码</div>
<div class="th" style="left:771px;width:104px">诊疗项目单价</div>
<div class="th" style="left:875px;width:52px">申请</div>
<div class="th" style="left:927px;width:104px">监管编码</div>
<div class="th" style="left:1031px;width:156px">备注</div>
<div class="th" style="left:1187px;width:78px">是否停用</div>
<div class="th" style="left:1265px;width:78px">启用日期</div>
<div class="th" style="left:1343px;width:74px">停止日期</div>
</div>
    <div class="tb" style="left:6px;top:656px;width:1415px;height:87px;border-radius:5px">
<div class="abs" style="left:0;top:0;width:1415px;height:30px;background:#97b2e1"></div>
<div class="abs" style="left:0;top:30px;width:1415px;height:57px;border:1px solid #dcdcdc;border-top:0;border-radius:0 0 5px 5px"></div>
<svg class="abs" style="left:687px;top:21px" width="41" height="30" viewBox="0 0 41 30"><path d="M.5 13.500L7 1.600Q7.600 .500 9 .500H32Q33.400 .500 34 1.600L40.500 13.500V27Q40.500 29.500 38 29.500H3Q.5 29.500 .5 27z" fill="#fff" stroke="#cdd3de" stroke-width="1.150"/><path d="M.5 13.500L7 1.600Q7.600 .500 9 .500H32Q33.400 .500 34 1.600L40.500 13.500H26.500V16A6.250 6.250 0 0 1 14 16V13.500z" fill="#f0f1f4" stroke="#cdd3de" stroke-width="1.150"/></svg>
<div class="empty" style="left:679px;top:61px">暂无数据</div>
<div class="abs" style="left:1px;top:67px;width:1413px;height:18px;background:#fff"></div>
<div class="sbv" style="left:1395px;top:30px;height:56px;width:19px;border-radius:0 0 4px 0"><div class="au" style="left:5px;top:9px"></div><div class="thumb" style="left:2px;top:21px;width:17px;height:15px"></div><div class="ad" style="left:5px;top:43px"></div></div>
<div class="abs" style="left:0;top:0;width:1415px;height:30px;background:#97b2e1"></div>

<div class="th" style="left:0px;width:104px">物资编码</div>
<div class="th" style="left:104px;width:271px">物资名称</div>
<div class="th" style="left:375px;width:209px">物资规格</div>
<div class="th" style="left:584px;width:84px">单位</div>
<div class="th" style="left:668px;width:83px">购进价</div>
<div class="th" style="left:751px;width:83px">零售价</div>
<div class="th" style="left:834px;width:271px">供货单位</div>
<div class="th" style="left:1105px;width:271px">生产单位</div>
</div>
    
    <div class="hl" style="left:0;top:755px;width:1427px"></div>
    <div class="lg" style="left:10px;top:746px">组合项目明细</div>
<div class="tb" style="left:6px;top:769px;width:1415px;height:92px;border-radius:5px">
<div class="abs" style="left:0;top:0;width:1415px;height:30px;background:#97b2e1"></div>
<div class="abs" style="left:0;top:30px;width:1415px;height:62px;border:1px solid #dcdcdc;border-top:0;border-radius:0 0 5px 5px"></div>
<svg class="abs" style="left:687px;top:34px" width="41" height="30" viewBox="0 0 41 30"><path d="M.5 13.500L7 1.600Q7.600 .500 9 .500H32Q33.400 .500 34 1.600L40.500 13.500V27Q40.500 29.500 38 29.500H3Q.5 29.500 .5 27z" fill="#fff" stroke="#cdd3de" stroke-width="1.150"/><path d="M.5 13.500L7 1.600Q7.600 .500 9 .500H32Q33.400 .500 34 1.600L40.500 13.500H26.500V16A6.250 6.250 0 0 1 14 16V13.500z" fill="#f0f1f4" stroke="#cdd3de" stroke-width="1.150"/></svg>
<div class="empty" style="left:679px;top:73px">暂无数据</div>
<div class="sbv" style="left:1395px;top:30px;height:61px;width:19px;border-radius:0 0 4px 0"><div class="au" style="left:5px;top:10px"></div><div class="thumb" style="left:2px;top:21px;width:17px;height:17px"></div><div class="ad" style="left:5px;top:48px"></div></div>

<div class="th" style="left:0px;width:104px">项目编号</div>
<div class="th" style="left:104px;width:209px">项目名称</div>
<div class="th" style="left:313px;width:104px">项目单位</div>
<div class="th" style="left:417px;width:104px">门诊发票</div>
<div class="th" style="left:521px;width:104px">住院发票</div>
<div class="th" style="left:625px;width:104px">核算项目</div>
<div class="th" style="left:729px;width:104px">病案项目</div>
</div>
  </div>

</div>
</body>
</html>
